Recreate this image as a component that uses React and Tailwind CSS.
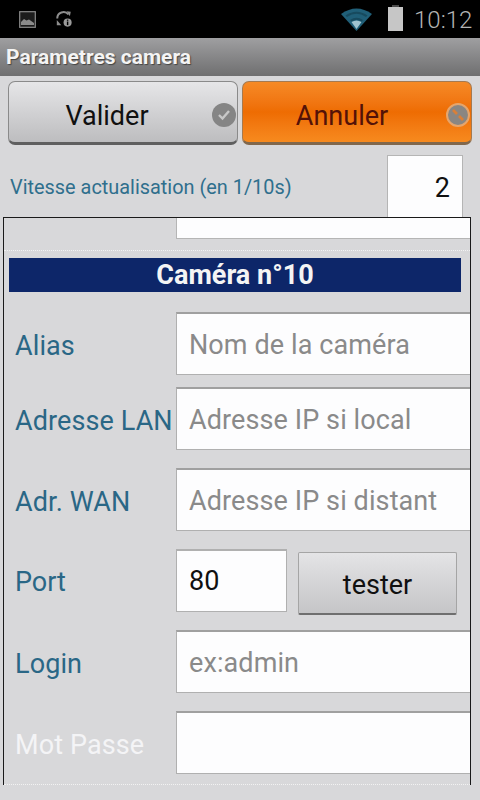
import React from "react";

const font = { fontFamily: "Roboto, sans-serif" };

function Field({ label, placeholder, top, labelClass = "text-[#2a6786]" }) {
  return (
    <div className={`flex items-center ${top} h-[63px]`}>
      <div className={`w-[172px] pl-[11px] pt-[5px] whitespace-nowrap text-[27px] tracking-[0.1px] leading-none ${labelClass}`}>{label}</div>
      <div className="flex-1 h-full flex items-center pl-[12px] pt-[2px] bg-[#fdfdfe] border-t-2 border-l border-b border-[#b0b0b0] border-t-[#a0a0a0] text-[27px] tracking-[0.1px] text-[#8a8a8a] whitespace-nowrap overflow-hidden">
        {placeholder}
      </div>
    </div>
  );
}

export default function App() {
  return (
    <div className="w-[480px] h-[800px] overflow-hidden bg-[#d8d8da] flex flex-col font-['Roboto',sans-serif]" style={font}>
      {/* status bar */}
      <div className="h-[38px] bg-black flex items-center pl-[19px] pr-[9px] shrink-0">
        <svg width="17" height="17" viewBox="0 0 17 17" className="text-[#8b8b8b]">
          <rect x="0.7" y="0.7" width="15.6" height="15.6" fill="#1c1c1c" stroke="currentColor" strokeWidth="1.2" />
          <path d="M2 14 L2 11 L5 8 L7.5 9.5 L10 8.5 L15 12 L15 14 Z" fill="currentColor" />
        </svg>
        <svg width="18" height="18" viewBox="0 0 20 20" className="ml-[19px]" fill="none" stroke="#8e8e8e">
          <path d="M2.5 9.5 A7 7 0 0 1 15 5" strokeWidth="2.2" />
          <path d="M13 1.5 L17.5 2 L16.5 7 Z" fill="#8e8e8e" stroke="none" />
          <path d="M2 11 L2 17 L7 17 Z" fill="#8e8e8e" stroke="none" />
          <circle cx="14" cy="14" r="4.5" fill="#9a9a9a" stroke="none" />
          <rect x="13.2" y="12.8" width="1.6" height="4" fill="#000" stroke="none" />
          <rect x="13.2" y="10.7" width="1.6" height="1.3" fill="#000" stroke="none" />
        </svg>
        <div className="flex-1" />
        <svg width="31" height="24" viewBox="0 0 31 24" className="mr-[16px]">
          <path d="M0 7 Q15.5 -4 31 7 L15.5 24 Z" fill="#205f78" />
          <path d="M4.5 8.5 Q15.5 1 26.5 8.5 L25 10 Q15.5 3.5 6 10 Z" fill="#174a5e" />
          <path d="M9 13 Q15.5 8.5 22 13 L20.5 14.5 Q15.5 11 10.5 14.5 Z" fill="#174a5e" />
          <path d="M10.5 15 Q15.5 12 20.5 15 L15.5 22 Z" fill="#9fc4d0" />
        </svg>
        <div className="w-[15px] h-[24px] mr-[11px] relative -mt-[1px] bg-[#c6c6c6]">
          <div className="absolute -top-[2px] left-[4px] w-[7px] h-[2px] bg-[#4a4a4a]" />
        </div>
        <div className="text-[#b4b4b4] text-[24px] font-light leading-none w-[57px] pt-[1px] whitespace-nowrap">10:12</div>
      </div>

      {/* title bar */}
      <div className="h-[38px] shrink-0 bg-gradient-to-b from-[#9f9fa1] to-[#6f6f70] flex items-center pl-[6px] pt-[2px] text-[#f4f4f4] text-[21px] font-bold">
        <span className="[text-shadow:1px_1px_1px_#444]">Parametres camera</span>
      </div>

      {/* action buttons */}
      <div className="flex pl-[8px] gap-[4px] mt-[5px] h-[65px] shrink-0">
        <div className="relative w-[230px] h-[64px] rounded-[7px] border border-[#8a8a8a] border-b-[3px] border-b-[#5f5f5f] bg-gradient-to-b from-[#e6e6e8] to-[#bdbdbf] flex items-center justify-center text-[27px] text-[#101010] pt-[8px] pr-[32px]">
          Valider
          <div className="absolute right-[1px] top-[21px] w-[24px] h-[24px] rounded-full bg-[#858585] flex items-center justify-center">
            <svg width="14" height="12" viewBox="0 0 14 12" fill="none" stroke="#c8c8c8" strokeWidth="2.4">
              <path d="M2 6 L5.5 9.5 L12 2" />
            </svg>
          </div>
        </div>
        <div className="relative w-[230px] h-[64px] rounded-[7px] border border-[#a57a50] border-b-[3px] border-b-[#80674c] bg-gradient-to-b from-[#f68a25] via-[#ee6c02] to-[#f78a1e] flex items-center justify-center text-[27px] text-[#541208] pt-[8px] pr-[30px]">
          Annuler
          <div className="absolute right-[1px] top-[21px] w-[24px] h-[24px] rounded-full bg-[#8a8682] border-2 border-[#e6a56c] flex items-center justify-center">
            <svg width="16" height="16" viewBox="0 0 16 16" fill="none" stroke="#d97f38" strokeWidth="2.6">
              <path d="M3 3 L7 7" />
              <path d="M9 9 L13 13" />
            </svg>
          </div>
        </div>
      </div>

      {/* refresh speed */}
      <div className="flex items-center h-[62px] mt-[9px] shrink-0">
        <div className="w-[387px] pl-[10px] pt-[4px] text-[19.9px] leading-[28px] text-[#2f6f8d] whitespace-nowrap">Vitesse actualisation (en 1/10s)</div>
        <div className="w-[76px] h-full bg-[#fdfdfe] border-t border-x border-[#b5b5b5] flex items-center justify-end pr-[12px] pt-[4px] text-[27px] text-[#101010]">2</div>
      </div>

      {/* scroll panel */}
      <div className="relative w-[468px] ml-[3px] h-[568px] shrink-0 overflow-hidden border-x border-t border-[#1a1a1a]">
        <div className="ml-[172px] h-[21px] bg-[#fdfdfe] border-b border-l border-[#b5b5b5]" />
        <div className="mt-[11px] border-t border-dotted border-[#f2f2f2]" />
        <div className="ml-[5px] w-[452px] mt-[7px] h-[34px] bg-[#0d2669] flex items-center justify-center text-[#f4f4f4] text-[27px] font-bold">
          Caméra n°10
        </div>
        <Field label="Alias" placeholder="Nom de la caméra" top="mt-[20px]" />
        <Field label="Adresse LAN" placeholder="Adresse IP si local" top="mt-[12px]" />
        <Field label="Adr. WAN" placeholder="Adresse IP si distant" top="mt-[18px]" />
        <div className="flex mt-[18px] h-[66px]">
          <div className="w-[172px] pl-[11px] h-[63px] flex items-center pt-[3px] text-[27px] leading-none text-[#2a6786]">Port</div>
          <div className="w-[111px] h-[63px] flex items-center pl-[12px] bg-[#fdfdfe] border-t-2 border-l border-r border-b border-[#b0b0b0] text-[27px] text-[#101010]">80</div>
          <div className="ml-[11px] mt-[3px] w-[159px] h-[63px] rounded-[2px] border border-[#a5a5a5] border-b-2 border-b-[#6f6f6f] bg-gradient-to-b from-[#e4e4e6] to-[#c5c5c7] flex items-center justify-center pt-[4px] text-[27px] text-[#101010]">
            tester
          </div>
        </div>
        <Field label="Login" placeholder="ex:admin" top="mt-[15px]" />
        <Field label="Mot Passe" placeholder="" top="mt-[18px]" labelClass="text-[#f4f4f6]" />
        <div className="absolute left-0 right-0 bottom-0 border-b border-dotted border-[#f2f2f2]" />
      </div>
    </div>
  );
}
